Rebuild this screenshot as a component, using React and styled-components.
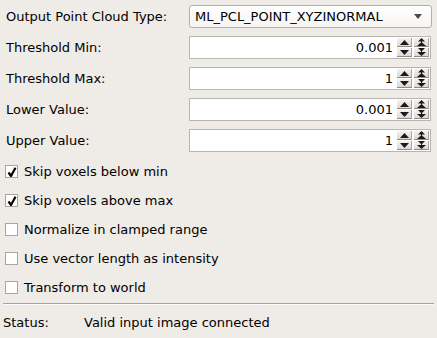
import React from "react";
import styled, { createGlobalStyle } from "styled-components";

const GlobalStyle = createGlobalStyle`
  html, body { margin: 0; padding: 0; background: #efebe7; }
  body {
    font-family: "DejaVu Sans", "Liberation Sans", sans-serif;
    font-size: 13px;
    color: #000;
    width: 437px;
    height: 338px;
    overflow: hidden;
  }
`;

const Panel = styled.div`
  display: flex;
  flex-direction: column;
  width: 437px;
`;

const Form = styled.div`
  display: grid;
  grid-template-columns: 183px 243px;
  grid-auto-rows: 23px;
  row-gap: 8px;
  padding: 5px 0 0 6px;
  align-items: center;
`;

const Label = styled.div`
  line-height: 23px;
  white-space: nowrap;
`;

const Combo = styled.div`
  box-sizing: border-box;
  height: 23px;
  border: 1px solid #b3afab;
  border-radius: 3px;
  background: linear-gradient(#ffffff, #f6f5f4);
  display: flex;
  align-items: center;
  justify-content: space-between;
  padding: 0 9px 0 5px;
`;

const SpinBox = styled.div`
  box-sizing: border-box;
  height: 23px;
  width: 242px;
  border: 1px solid #b8b4b0;
  background: #fff;
  display: flex;
  align-items: center;
`;

const SpinValue = styled.div`
  flex: 1;
  text-align: right;
  padding-right: 4px;
  line-height: 21px;
`;

const ButtonCol = styled.div`
  display: flex;
  flex-direction: column;
  gap: 1px;
  margin-right: ${(p) => (p.$last ? "1px" : "2px")};
`;

const SpinButton = styled.div`
  box-sizing: border-box;
  width: 15px;
  height: 9px;
  background: linear-gradient(#f4f3f2, #dcd9d6);
  border-bottom: 1px solid #8e8a86;
  border-right: 1px solid #a6a29e;
  display: flex;
  align-items: center;
  justify-content: center;
`;

const Checks = styled.div`
  display: flex;
  flex-direction: column;
  padding: 5px 0 0 5px;
`;

const CheckRow = styled.label`
  display: flex;
  align-items: center;
  height: 29px;
  gap: 6px;
`;

const Box = styled.span`
  box-sizing: border-box;
  width: 13px;
  height: 13px;
  background: #fff;
  border: 1px solid #a9a5a1;
  display: flex;
  align-items: center;
  justify-content: center;
`;

const Separator = styled.div`
  margin: 1px 3px 0 3px;
  height: 1px;
  background: #a7a3a0;
  border-bottom: 1px solid #fbfaf9;
`;

const StatusRow = styled.div`
  display: grid;
  grid-template-columns: 81px 1fr;
  padding: 9px 0 0 3px;
  line-height: 17px;
`;

const Tri = ({ down }) => (
  <svg width="9" height="5" viewBox="0 0 9 5">
    <path d={down ? "M0 0 L9 0 L4.5 5 Z" : "M0 5 L9 5 L4.5 0 Z"} fill="#1a1a1a" />
  </svg>
);

const DoubleTri = ({ down }) => (
  <svg width="9" height="8" viewBox="0 0 9 8">
    {down ? (
      <path d="M1 0 L8 0 L4.5 3.5 Z M0 4 L9 4 L4.5 8 Z M4 2 H5 V5 H4 Z" fill="#1a1a1a" />
    ) : (
      <path d="M4.5 0 L8 3.5 L1 3.5 Z M4.5 4 L9 8 L0 8 Z M4 3 H5 V6 H4 Z" fill="#1a1a1a" />
    )}
  </svg>
);

const Check = () => (
  <svg width="10" height="10" viewBox="0 0 10 10">
    <path d="M1.5 5.5 L4 9 L8.5 0.8" stroke="#000" strokeWidth="2.2" fill="none" strokeLinejoin="miter" />
  </svg>
);

const Spin = ({ value }) => (
  <SpinBox>
    <SpinValue>{value}</SpinValue>
    <ButtonCol>
      <SpinButton><Tri /></SpinButton>
      <SpinButton><Tri down /></SpinButton>
    </ButtonCol>
    <ButtonCol $last>
      <SpinButton><DoubleTri /></SpinButton>
      <SpinButton><DoubleTri down /></SpinButton>
    </ButtonCol>
  </SpinBox>
);

const fields = [
  ["Threshold Min:", "0.001"],
  ["Threshold Max:", "1"],
  ["Lower Value:", "0.001"],
  ["Upper Value:", "1"],
];

const checks = [
  ["Skip voxels below min", true],
  ["Skip voxels above max", true],
  ["Normalize in clamped range", false],
  ["Use vector length as intensity", false],
  ["Transform to world", false],
];

export default function App() {
  return (
    <Panel>
      <GlobalStyle />
      <Form>
        <Label>Output Point Cloud Type:</Label>
        <Combo>
          <span>ML_PCL_POINT_XYZINORMAL</span>
          <svg width="8" height="5" viewBox="0 0 8 5">
            <path d="M0 0 L8 0 L4 5 Z" fill="#4a4a4a" />
          </svg>
        </Combo>
        {fields.map(([l, v]) => (
          <React.Fragment key={l}>
            <Label>{l}</Label>
            <Spin value={v} />
          </React.Fragment>
        ))}
      </Form>
      <Checks>
        {checks.map(([l, c]) => (
          <CheckRow key={l}>
            <Box>{c && <Check />}</Box>
            <span>{l}</span>
          </CheckRow>
        ))}
      </Checks>
      <Separator />
      <StatusRow>
        <span>Status:</span>
        <span>Valid input image connected</span>
      </StatusRow>
    </Panel>
  );
}
